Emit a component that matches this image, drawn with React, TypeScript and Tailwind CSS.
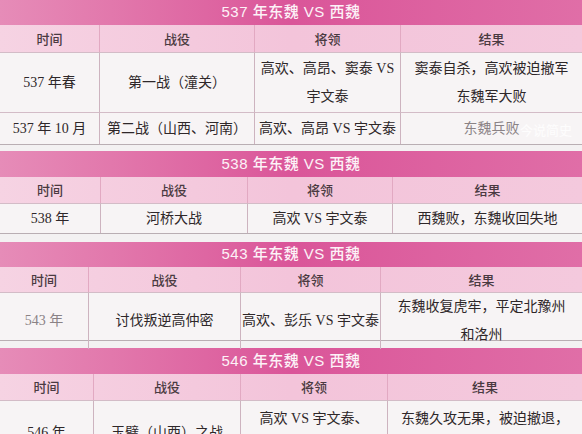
import React from "react";

type Cell = { lines: string[]; faded?: boolean };
type Row = { h: string; cells: Cell[] };
type Table = { year: string; grid: string; title: string; head: string; rows: Row[]; gap: string };

const c = (s: string | string[], faded = false): Cell => ({ lines: Array.isArray(s) ? s : [s], faded });

const tables: Table[] = [
  {
    year: "537",
    grid: "grid grid-cols-[99px_155px_146px_1fr]",
    title: "h-[25px]",
    head: "h-[27px]",
    gap: "mt-0",
    rows: [
      {
        h: "h-[60px]",
        cells: [c("537 年春"), c("第一战（潼关）"), c(["高欢、高昂、窦泰 VS", "宇文泰"]), c(["窦泰自杀，高欢被迫撤军", "东魏军大败"])],
      },
      {
        h: "h-[32px]",
        cells: [c("537 年 10 月"), c("第二战（山西、河南）"), c("高欢、高昂 VS 宇文泰"), c("东魏兵败", true)],
      },
    ],
  },
  {
    year: "538",
    grid: "grid grid-cols-[100px_147px_145px_1fr]",
    title: "h-[26px]",
    head: "h-[26px]",
    gap: "mt-[6px]",
    rows: [{ h: "h-[30px]", cells: [c("538 年"), c("河桥大战"), c("高欢 VS 宇文泰"), c("西魏败，东魏收回失地")] }],
  },
  {
    year: "543",
    grid: "grid grid-cols-[88px_152px_140px_1fr]",
    title: "h-[25px]",
    head: "h-[25px]",
    gap: "mt-[8px]",
    rows: [
      {
        h: "h-[48px]",
        cells: [c("543 年", true), c("讨伐叛逆高仲密"), c("高欢、彭乐 VS 宇文泰"), c(["东魏收复虎牢，平定北豫州", "和洛州"])],
      },
    ],
  },
  {
    year: "546",
    grid: "grid grid-cols-[93px_147px_147px_1fr]",
    title: "h-[26px]",
    head: "h-[26px]",
    gap: "mt-[7px]",
    rows: [
      {
        h: "h-[64px]",
        cells: [c("546 年"), c("玉璧（山西）之战"), c(["高欢 VS 宇文泰、", "韦孝宽"]), c(["东魏久攻无果，被迫撤退，", "高欢病死"])],
      },
    ],
  },
];

const heads = ["时间", "战役", "将领", "结果"];

function BodyCell({ cell, idx, row }: { cell: Cell; idx: number; row: Row }) {
  const multi = cell.lines.length > 1;
  const isLast = row.cells.length - 1 === idx;
  return (
    <div
      className={
        "relative flex flex-col items-center justify-center whitespace-nowrap border-t border-[#d3bcc7] " +
        (idx > 0 ? "border-l border-l-[#cdb3bf] " : "") +
        (multi ? "leading-[28px] " : "leading-[20px] ") +
        (cell.faded ? "text-[#8a8285]" : "text-[#2e2729]")
      }
    >
      {cell.lines.map((l, i) => (
        <span key={i}>{l}</span>
      ))}
      {isLast && cell.lines[0] === "东魏兵败" && (
        <span className="absolute right-[10px] top-[7px] text-[13px] text-white/80 font-['Noto_Sans_CJK_SC',sans-serif]">
          今说简史
        </span>
      )}
    </div>
  );
}

export default function App() {
  return (
    <div className="w-[582px] h-[434px] overflow-hidden bg-[#f3f1f2] font-['Liberation_Serif','Noto_Sans_CJK_SC',serif] text-[14px]">
      {tables.map((t) => (
        <div key={t.year} className={t.gap + " border-b border-[#b9aeb3] bg-[#f7f4f5]"}>
          <div
            className={
              t.title +
              " flex items-center justify-center bg-gradient-to-r from-[#e68cb8] via-[#da5599] to-[#e06ea7] text-[#fdf2f7] text-[15px] font-medium font-['Liberation_Sans','Noto_Sans_CJK_SC',sans-serif] tracking-[0.5px]"
            }
          >
            {t.year} 年东魏 VS 西魏
          </div>
          <div className={t.grid + " " + t.head + " bg-gradient-to-r from-[#f6d3e3] via-[#f3c4da] to-[#f4c9dd]"}>
            {heads.map((h, i) => (
              <div
                key={h}
                className={
                  "flex items-center justify-center text-[13px] font-medium text-[#4a3a41] font-['Noto_Sans_CJK_SC',sans-serif] " +
                  (i > 0 ? "border-l border-[#e2a9c2]" : "")
                }
              >
                {h}
              </div>
            ))}
          </div>
          {t.rows.map((r, ri) => (
            <div key={ri} className={t.grid + " " + r.h}>
              {r.cells.map((cell, ci) => (
                <BodyCell key={ci} cell={cell} idx={ci} row={r} />
              ))}
            </div>
          ))}
        </div>
      ))}
    </div>
  );
}
